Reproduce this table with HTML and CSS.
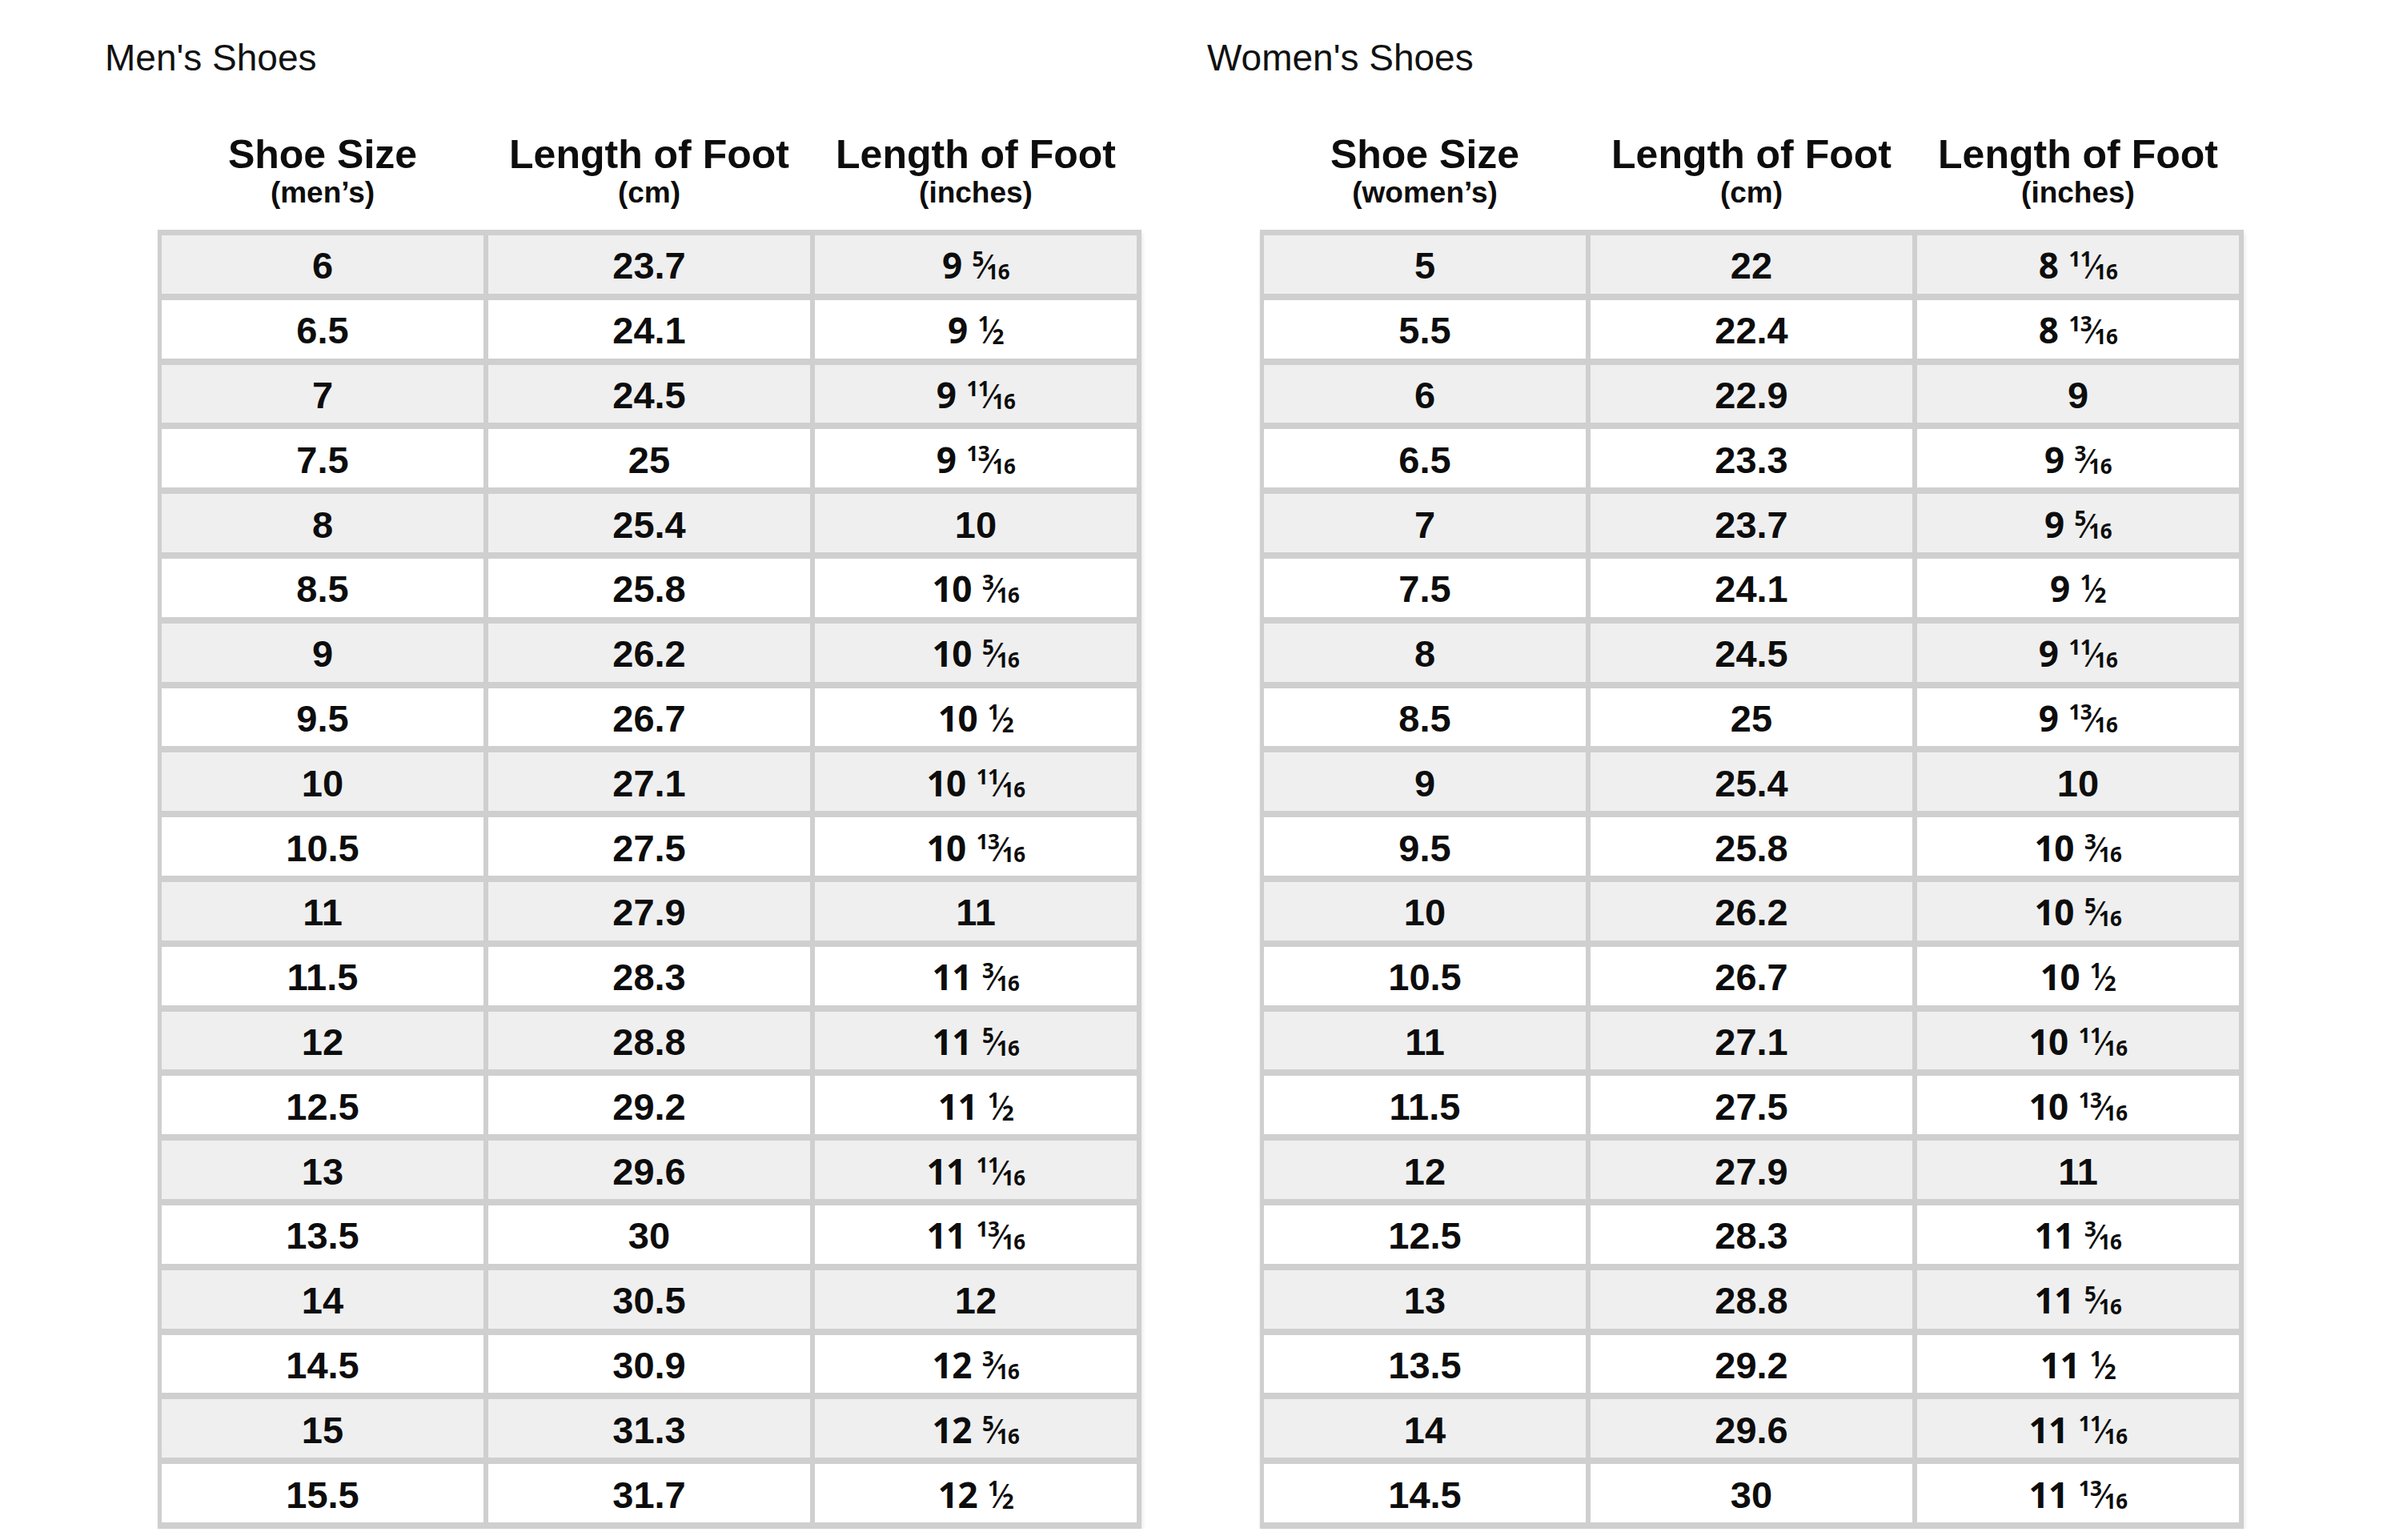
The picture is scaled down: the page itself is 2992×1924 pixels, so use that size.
FILE: index.html
```html
<!DOCTYPE html>
<html lang="en">
<head>
<meta charset="utf-8">
<title>Shoe Size Charts</title>
<link rel="stylesheet" href="styles.css">
</head>
<body>
<main class="page">
  <section class="sizes">
    <h2 class="title">Men's Shoes</h2>
    <div class="head">
      <div class="hcell"><div class="h1">Shoe Size</div><div class="h2">(men’s)</div></div>
      <div class="hcell"><div class="h1">Length of Foot</div><div class="h2">(cm)</div></div>
      <div class="hcell"><div class="h1">Length of Foot</div><div class="h2">(inches)</div></div>
    </div>
    <div class="chart">
      <div class="c g">6</div><div class="c g">23.7</div><div class="c g f">9<span class="fr"><sup>5</sup>⁄<sub>16</sub></span></div>
      <div class="c">6.5</div><div class="c">24.1</div><div class="c f">9<span class="fr"><sup>1</sup>⁄<sub>2</sub></span></div>
      <div class="c g">7</div><div class="c g">24.5</div><div class="c g f">9<span class="fr"><sup>11</sup>⁄<sub>16</sub></span></div>
      <div class="c">7.5</div><div class="c">25</div><div class="c f">9<span class="fr"><sup>13</sup>⁄<sub>16</sub></span></div>
      <div class="c g">8</div><div class="c g">25.4</div><div class="c g">10</div>
      <div class="c">8.5</div><div class="c">25.8</div><div class="c f">10<span class="fr"><sup>3</sup>⁄<sub>16</sub></span></div>
      <div class="c g">9</div><div class="c g">26.2</div><div class="c g f">10<span class="fr"><sup>5</sup>⁄<sub>16</sub></span></div>
      <div class="c">9.5</div><div class="c">26.7</div><div class="c f">10<span class="fr"><sup>1</sup>⁄<sub>2</sub></span></div>
      <div class="c g">10</div><div class="c g">27.1</div><div class="c g f">10<span class="fr"><sup>11</sup>⁄<sub>16</sub></span></div>
      <div class="c">10.5</div><div class="c">27.5</div><div class="c f">10<span class="fr"><sup>13</sup>⁄<sub>16</sub></span></div>
      <div class="c g">11</div><div class="c g">27.9</div><div class="c g">11</div>
      <div class="c">11.5</div><div class="c">28.3</div><div class="c f">11<span class="fr"><sup>3</sup>⁄<sub>16</sub></span></div>
      <div class="c g">12</div><div class="c g">28.8</div><div class="c g f">11<span class="fr"><sup>5</sup>⁄<sub>16</sub></span></div>
      <div class="c">12.5</div><div class="c">29.2</div><div class="c f">11<span class="fr"><sup>1</sup>⁄<sub>2</sub></span></div>
      <div class="c g">13</div><div class="c g">29.6</div><div class="c g f">11<span class="fr"><sup>11</sup>⁄<sub>16</sub></span></div>
      <div class="c">13.5</div><div class="c">30</div><div class="c f">11<span class="fr"><sup>13</sup>⁄<sub>16</sub></span></div>
      <div class="c g">14</div><div class="c g">30.5</div><div class="c g">12</div>
      <div class="c">14.5</div><div class="c">30.9</div><div class="c f">12<span class="fr"><sup>3</sup>⁄<sub>16</sub></span></div>
      <div class="c g">15</div><div class="c g">31.3</div><div class="c g f">12<span class="fr"><sup>5</sup>⁄<sub>16</sub></span></div>
      <div class="c">15.5</div><div class="c">31.7</div><div class="c f">12<span class="fr"><sup>1</sup>⁄<sub>2</sub></span></div>
    </div>
  </section>
  <section class="sizes">
    <h2 class="title">Women's Shoes</h2>
    <div class="head">
      <div class="hcell"><div class="h1">Shoe Size</div><div class="h2">(women’s)</div></div>
      <div class="hcell"><div class="h1">Length of Foot</div><div class="h2">(cm)</div></div>
      <div class="hcell"><div class="h1">Length of Foot</div><div class="h2">(inches)</div></div>
    </div>
    <div class="chart">
      <div class="c g">5</div><div class="c g">22</div><div class="c g f">8<span class="fr"><sup>11</sup>⁄<sub>16</sub></span></div>
      <div class="c">5.5</div><div class="c">22.4</div><div class="c f">8<span class="fr"><sup>13</sup>⁄<sub>16</sub></span></div>
      <div class="c g">6</div><div class="c g">22.9</div><div class="c g">9</div>
      <div class="c">6.5</div><div class="c">23.3</div><div class="c f">9<span class="fr"><sup>3</sup>⁄<sub>16</sub></span></div>
      <div class="c g">7</div><div class="c g">23.7</div><div class="c g f">9<span class="fr"><sup>5</sup>⁄<sub>16</sub></span></div>
      <div class="c">7.5</div><div class="c">24.1</div><div class="c f">9<span class="fr"><sup>1</sup>⁄<sub>2</sub></span></div>
      <div class="c g">8</div><div class="c g">24.5</div><div class="c g f">9<span class="fr"><sup>11</sup>⁄<sub>16</sub></span></div>
      <div class="c">8.5</div><div class="c">25</div><div class="c f">9<span class="fr"><sup>13</sup>⁄<sub>16</sub></span></div>
      <div class="c g">9</div><div class="c g">25.4</div><div class="c g">10</div>
      <div class="c">9.5</div><div class="c">25.8</div><div class="c f">10<span class="fr"><sup>3</sup>⁄<sub>16</sub></span></div>
      <div class="c g">10</div><div class="c g">26.2</div><div class="c g f">10<span class="fr"><sup>5</sup>⁄<sub>16</sub></span></div>
      <div class="c">10.5</div><div class="c">26.7</div><div class="c f">10<span class="fr"><sup>1</sup>⁄<sub>2</sub></span></div>
      <div class="c g">11</div><div class="c g">27.1</div><div class="c g f">10<span class="fr"><sup>11</sup>⁄<sub>16</sub></span></div>
      <div class="c">11.5</div><div class="c">27.5</div><div class="c f">10<span class="fr"><sup>13</sup>⁄<sub>16</sub></span></div>
      <div class="c g">12</div><div class="c g">27.9</div><div class="c g">11</div>
      <div class="c">12.5</div><div class="c">28.3</div><div class="c f">11<span class="fr"><sup>3</sup>⁄<sub>16</sub></span></div>
      <div class="c g">13</div><div class="c g">28.8</div><div class="c g f">11<span class="fr"><sup>5</sup>⁄<sub>16</sub></span></div>
      <div class="c">13.5</div><div class="c">29.2</div><div class="c f">11<span class="fr"><sup>1</sup>⁄<sub>2</sub></span></div>
      <div class="c g">14</div><div class="c g">29.6</div><div class="c g f">11<span class="fr"><sup>11</sup>⁄<sub>16</sub></span></div>
      <div class="c">14.5</div><div class="c">30</div><div class="c f">11<span class="fr"><sup>13</sup>⁄<sub>16</sub></span></div>
    </div>
  </section>
</main>
</body>
</html>
```
FILE: styles.css
```css
html, body {
  margin: 0;
  padding: 0;
  background: #ffffff;
}

body {
  font-family: "Liberation Sans", Arial, sans-serif;
  color: #111111;
}

.page {
  display: flex;
  gap: 82px;
  padding: 49px 0 0 131px;
}

.sizes {
  display: flex;
  flex-direction: column;
}

.title {
  margin: 0;
  font-size: 46px;
  line-height: 46px;
  font-weight: 400;
  color: #111111;
}

.head {
  display: grid;
  grid-template-columns: repeat(3, 402px);
  column-gap: 6px;
  padding: 0 6px 0 5px;
  margin: 72px 0 24px 66px;
}

.hcell {
  text-align: center;
  font-weight: 700;
  color: #0d0d0d;
}

.h1 {
  font-size: 50px;
  line-height: 52px;
}

.h2 {
  font-size: 37px;
  line-height: 44px;
}

.chart {
  display: grid;
  grid-template-columns: repeat(3, 402px);
  grid-auto-rows: 72.8px;
  column-gap: 6px;
  row-gap: 8px;
  padding: 7px 6px 8px 5px;
  margin-left: 66px;
  background: #cfcfcf;
  box-shadow: 1px 4px 5px rgba(0, 0, 0, 0.10);
  width: max-content;
}

.c {
  display: flex;
  align-items: center;
  justify-content: center;
  padding-top: 3px;
  background: #ffffff;
  font-size: 47px;
  font-weight: 700;
  line-height: 47px;
  color: #0d0d0d;
}

.c.g {
  background: #efefef;
}

.c.f {
  font-family: "Open Sans", "Liberation Sans", sans-serif;
  font-size: 44px;
  letter-spacing: -0.5px;
}

.fr {
  margin-left: 13px;
  font-size: 42px;
  font-weight: 500;
  letter-spacing: 0;
}

.fr sup,
.fr sub {
  font-size: 26px;
  font-weight: 700;
  line-height: 0;
  letter-spacing: -0.5px;
}

.fr sup {
  vertical-align: 15px;
  margin-right: -1px;
}

.fr sub {
  vertical-align: -1px;
  margin-left: -1px;
}
```
